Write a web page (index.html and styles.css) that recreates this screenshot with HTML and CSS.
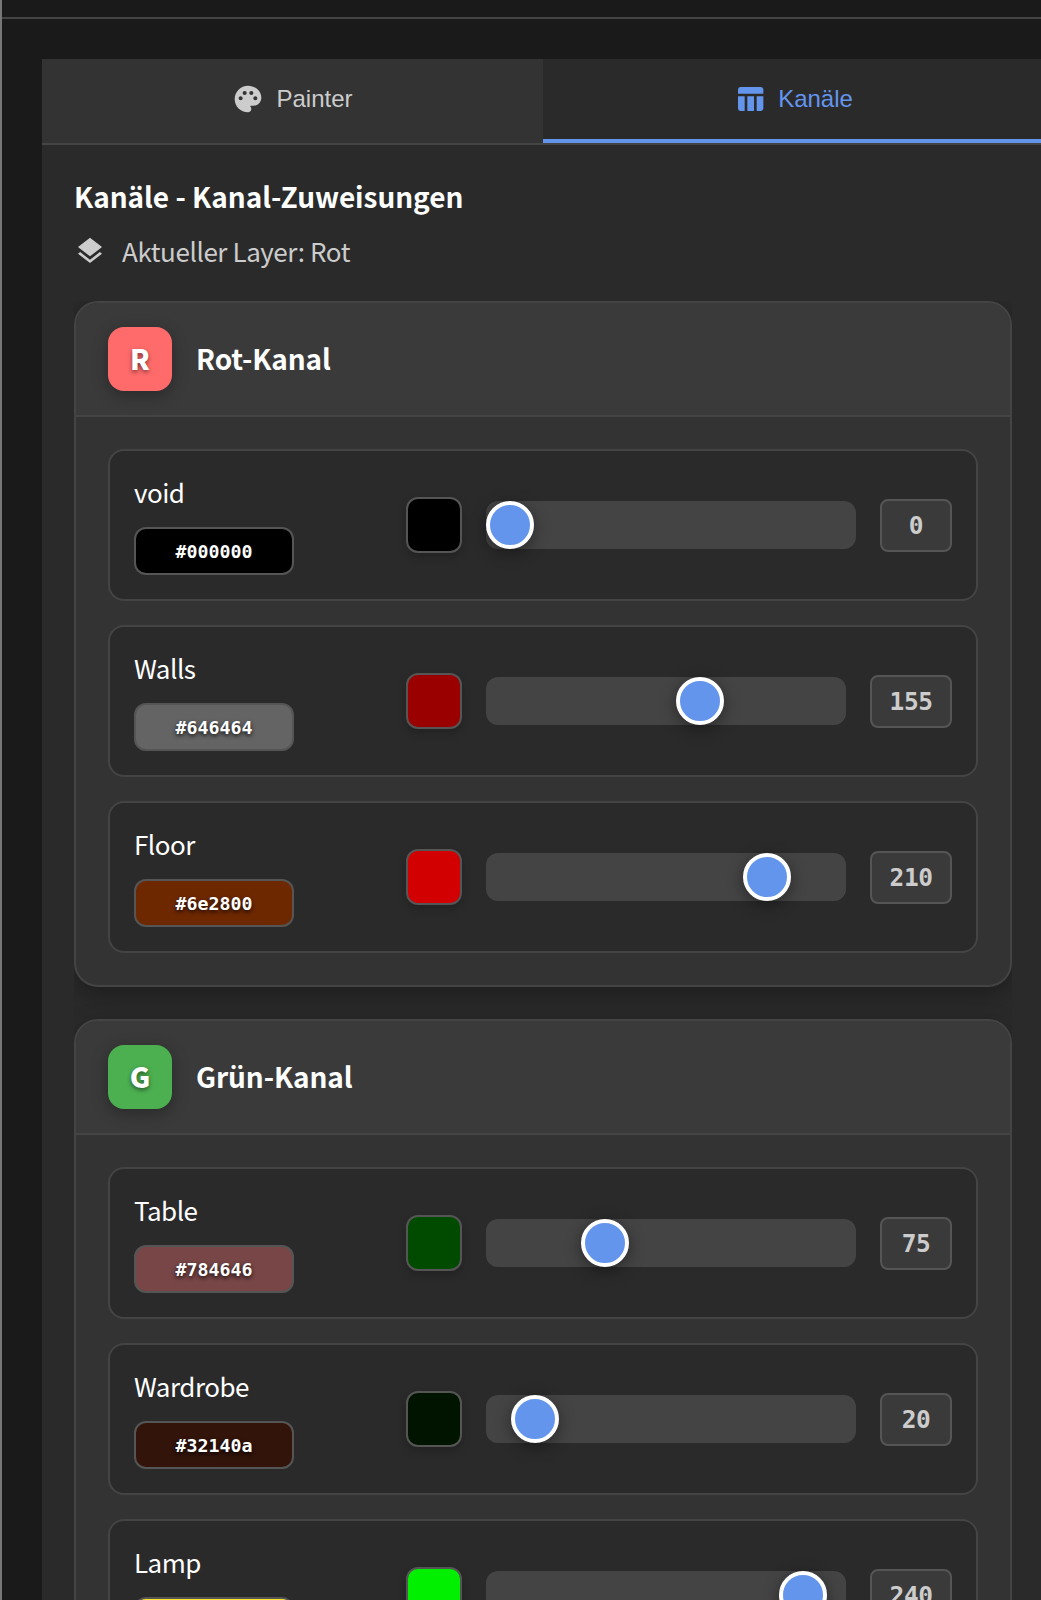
FILE: index.html
```html
<!DOCTYPE html>
<html lang="de">
<head>
<meta charset="utf-8">
<title>Kanäle</title>
<link rel="stylesheet" href="styles.css">
</head>
<body>
<div class="app">
  <div class="topbar"></div>
  <main class="panel">
    <nav class="tabs">
      <button class="tab">
        <svg class="icon" viewBox="0 0 24 24"><path d="M12 2C6.490 2 2 6.490 2 12s4.490 10 10 10c1.380 0 2.500-1.120 2.500-2.500 0-.610-.230-1.200-.640-1.670-.080-.100-.130-.210-.130-.330 0-.280.220-.500.500-.500H16c3.310 0 6-2.690 6-6 0-4.960-4.490-9-10-9zm5.500 11c-.830 0-1.500-.670-1.500-1.500s.670-1.500 1.500-1.500 1.500.670 1.500 1.500-.670 1.500-1.500 1.500zm-3-4c-.830 0-1.500-.670-1.500-1.500S13.670 6 14.500 6s1.500.670 1.500 1.500S15.330 9 14.500 9zM5 11.500c0-.830.670-1.500 1.500-1.500S8 10.670 8 11.500 7.330 13 6.500 13 5 12.330 5 11.500zm6-4C11 8.330 10.330 9 9.500 9S8 8.330 8 7.500 8.670 6 9.500 6s1.500.670 1.500 1.500z"/></svg>
        Painter
      </button>
      <button class="tab tab-active">
        <svg class="icon" viewBox="0 0 24 24"><path d="M10 10.020h5V21h-5V10.020zM17 21h3c1.100 0 2-.900 2-2v-9h-5v11zm3-18H5c-1.100 0-2 .900-2 2v3h19V5c0-1.100-.900-2-2-2zM3 19c0 1.100.900 2 2 2h3V10H3v9z"/></svg>
        Kanäle
      </button>
    </nav>
    <section class="content">
      <h1 class="title">Kanäle - Kanal-Zuweisungen</h1>
      <p class="layer">
        <svg class="icon" viewBox="0 0 24 24"><path d="M11.990 18.540l-7.370-5.730L3 14.070l9 7 9-7-1.630-1.270-7.380 5.740zM12 16l7.360-5.730L21 9l-9-7-9 7 1.630 1.270L12 16z"/></svg>
        <span>Aktueller Layer: Rot</span>
      </p>
      <div class="channels">
        <article class="card">
          <header class="card-head"><span class="badge badge-red">R</span><h2 class="card-title">Rot-Kanal</h2></header>
          <div class="rows">
            <div class="row">
              <div class="info"><span class="name">void</span><span class="hex" style="background:#000000">#000000</span></div>
              <span class="swatch" style="background:#000000"></span>
              <input class="slider" type="range" min="0" max="255" value="0">
              <span class="value">0</span>
            </div>
            <div class="row">
              <div class="info"><span class="name">Walls</span><span class="hex" style="background:#646464">#646464</span></div>
              <span class="swatch" style="background:#9b0000"></span>
              <input class="slider" type="range" min="0" max="255" value="155">
              <span class="value">155</span>
            </div>
            <div class="row">
              <div class="info"><span class="name">Floor</span><span class="hex" style="background:#6e2800">#6e2800</span></div>
              <span class="swatch" style="background:#d20000"></span>
              <input class="slider" type="range" min="0" max="255" value="210">
              <span class="value">210</span>
            </div>
          </div>
        </article>
        <article class="card">
          <header class="card-head"><span class="badge badge-green">G</span><h2 class="card-title">Grün-Kanal</h2></header>
          <div class="rows">
            <div class="row">
              <div class="info"><span class="name">Table</span><span class="hex" style="background:#784646">#784646</span></div>
              <span class="swatch" style="background:#004b00"></span>
              <input class="slider" type="range" min="0" max="255" value="75">
              <span class="value">75</span>
            </div>
            <div class="row">
              <div class="info"><span class="name">Wardrobe</span><span class="hex" style="background:#32140a">#32140a</span></div>
              <span class="swatch" style="background:#001400"></span>
              <input class="slider" type="range" min="0" max="255" value="20">
              <span class="value">20</span>
            </div>
            <div class="row">
              <div class="info"><span class="name">Lamp</span><span class="hex" style="background:#ffe628"></span></div>
              <span class="swatch" style="background:#00f000"></span>
              <input class="slider" type="range" min="0" max="255" value="239">
              <span class="value">240</span>
            </div>
          </div>
        </article>
      </div>
    </section>
  </main>
</div>
</body>
</html>
```
FILE: styles.css
```css
* {
  box-sizing: border-box;
}

body {
  margin: 0;
  height: 1600px;
  overflow: hidden;
  background: #1a1a1a;
  color: #fff;
  font-family: "Noto Sans CJK SC", "Noto Sans CJK JP", sans-serif;
}

.app {
  height: 1600px;
  overflow: hidden;
  border-left: 2px solid #777;
}

.topbar {
  height: 19px;
  border-bottom: 2px solid #444;
}

.panel {
  width: 1002px;
  margin: 40px 0 0 40px;
  background: #2a2a2a;
}

.tabs {
  display: grid;
  grid-template-columns: 501px 501px;
  height: 86px;
  border-bottom: 2px solid #444;
}

.tab {
  display: flex;
  align-items: center;
  justify-content: center;
  gap: 12px;
  padding: 0;
  border: 0;
  border-bottom: 4px solid transparent;
  background: #333;
  color: #ccc;
  font: 24px "Liberation Sans", Arial, sans-serif;
}

.tab-active {
  background: #2a2a2a;
  border-bottom-color: #6495ed;
  color: #6495ed;
}

.icon {
  width: 32px;
  height: 32px;
  flex: none;
  fill: currentColor;
}

.content {
  padding: 32px;
}

.title {
  margin: 0;
  height: 42px;
  font-size: 28px;
  line-height: 38px;
  font-weight: 600;
  letter-spacing: -0.04px;
  white-space: nowrap;
}

.layer {
  display: flex;
  align-items: center;
  gap: 16px;
  height: 36px;
  margin: 14px 0 32px;
  color: #ccc;
  font-size: 26px;
  line-height: 36px;
  letter-spacing: -0.42px;
}

.channels {
  display: flex;
  flex-direction: column;
  gap: 32px;
  overflow: hidden;
}

.card {
  overflow: hidden;
  border: 2px solid #444;
  border-radius: 24px;
  background: #333;
  box-shadow: 0 8px 24px rgba(0, 0, 0, 0.3);
}

.card-head {
  display: flex;
  align-items: center;
  gap: 24px;
  height: 114px;
  padding: 24px 32px;
  border-bottom: 2px solid #444;
  background: #3a3a3a;
}

.badge {
  width: 64px;
  height: 64px;
  border-radius: 16px;
  font-size: 28px;
  line-height: 63px;
  font-weight: 900;
  text-align: center;
  text-shadow: 0 2px 4px rgba(0, 0, 0, 0.5);
  box-shadow: 0 4px 16px rgba(0, 0, 0, 0.3);
}

.badge-red {
  background: #ff6b6b;
}

.badge-green {
  background: #4caf50;
}

.card-title {
  margin: 0;
  padding-bottom: 2px;
  font-size: 28px;
  line-height: 42px;
  font-weight: 600;
  letter-spacing: -0.1px;
}

.rows {
  display: flex;
  flex-direction: column;
  gap: 24px;
  padding: 32px;
}

.row {
  display: flex;
  align-items: center;
  gap: 24px;
  height: 152px;
  padding: 24px;
  border: 2px solid #444;
  border-radius: 16px;
  background: #2a2a2a;
}

.info {
  display: flex;
  flex-direction: column;
  justify-content: space-between;
  width: 248px;
  height: 100px;
}

.name {
  font-size: 26px;
  line-height: 34px;
  letter-spacing: -0.5px;
}

.hex {
  width: 160px;
  height: 48px;
  border: 2px solid #555;
  border-radius: 12px;
  font: 700 18.3px/46px "DejaVu Sans Mono", monospace;
  text-align: center;
  text-shadow: 0 2px 4px rgba(0, 0, 0, 0.8);
}

.swatch {
  flex: none;
  width: 56px;
  height: 56px;
  border: 2px solid #555;
  border-radius: 12px;
  box-shadow: 0 4px 8px rgba(0, 0, 0, 0.2);
}

.slider {
  -webkit-appearance: none;
  appearance: none;
  flex: 1;
  min-width: 0;
  height: 48px;
  margin: 0;
  border-radius: 12px;
  background: #444;
}

.slider::-webkit-slider-thumb {
  -webkit-appearance: none;
  appearance: none;
  width: 48px;
  height: 48px;
  border: 4px solid #fff;
  border-radius: 50%;
  background: #6495ed;
  box-shadow: 0 4px 16px rgba(0, 0, 0, 0.4);
}

.value {
  min-width: 72px;
  height: 53px;
  padding: 0 17.5px;
  border: 2px solid #555;
  border-radius: 8px;
  background: #3a3a3a;
  color: #ccc;
  font: 700 24.5px/50px "DejaVu Sans Mono", monospace;
  letter-spacing: -0.45px;
  text-align: center;
}
```
